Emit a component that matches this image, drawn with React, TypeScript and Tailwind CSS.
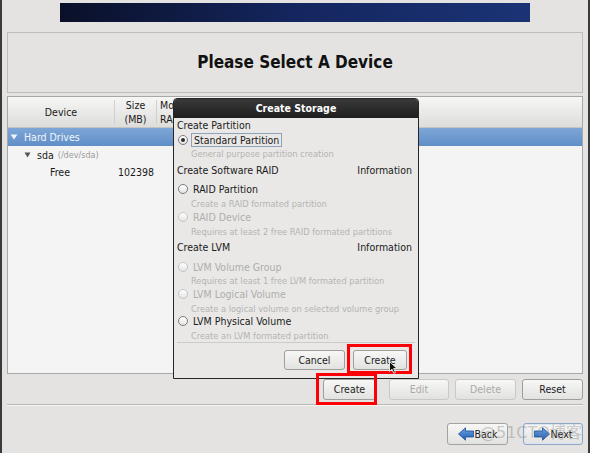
import React from "react";

function Radio({ checked = false, disabled = false }: { checked?: boolean; disabled?: boolean }) {
  return (
    <span
      className={
        "flex items-center justify-center w-[10px] h-[10px] rounded-full border bg-gradient-to-b from-[#ffffff] to-[#e4e4e4] shrink-0 " +
        (disabled ? "border-[#c4c4c4]" : "border-[#7c7c7c]")
      }
    >
      {checked && <span className="w-[4px] h-[4px] rounded-full bg-[#2e2e2e]" />}
    </span>
  );
}

function Btn({
  label,
  w,
  disabled = false,
  h = "h-[21px]",
}: {
  label: string;
  w: string;
  disabled?: boolean;
  h?: string;
}) {
  return (
    <div
      className={
        `${w} ${h} flex items-center justify-center rounded-[3px] border bg-gradient-to-b from-[#f7f7f6] to-[#e2e2e0] text-[10.5px] ` +
        (disabled ? "border-[#c9c9c7] text-[#aaaaa8]" : "border-[#9e9e9c] text-[#1c1c1c]")
      }
    >
      {label}
    </div>
  );
}

function ArrowLeft() {
  return (
    <svg width="16" height="14" viewBox="0 0 16 14">
      <defs>
        <linearGradient id="gl" x1="0" y1="0" x2="0" y2="1">
          <stop offset="0" stopColor="#6ea2e2" />
          <stop offset="1" stopColor="#1f5cb4" />
        </linearGradient>
      </defs>
      <path d="M0.5 7 L7.5 0.8 L7.5 4 L15.5 4 L15.5 10 L7.5 10 L7.5 13.2 Z" fill="url(#gl)" stroke="#1b4f9a" strokeWidth="0.8" />
    </svg>
  );
}

function ArrowRight() {
  return (
    <svg width="16" height="14" viewBox="0 0 16 14">
      <defs>
        <linearGradient id="gr" x1="0" y1="0" x2="0" y2="1">
          <stop offset="0" stopColor="#6ea2e2" />
          <stop offset="1" stopColor="#1f5cb4" />
        </linearGradient>
      </defs>
      <path d="M15.5 7 L8.5 0.8 L8.5 4 L0.5 4 L0.5 10 L8.5 10 L8.5 13.2 Z" fill="url(#gr)" stroke="#1b4f9a" strokeWidth="0.8" />
    </svg>
  );
}

export default function App() {
  return (
    <div className="relative w-[590px] h-[453px] overflow-hidden bg-[#e4e3e1] shadow-[inset_2px_0_0_#3a3a3a,inset_-2px_0_0_#3a3a3a] px-[7px] font-['DejaVu_Sans_Condensed','DejaVu_Sans',sans-serif] text-[#1a1a1a] text-[10.5px] leading-none">
      {/* top banner */}
      <div className="mx-auto mt-[3px] w-[470px] h-[19px] bg-gradient-to-r from-[#0a1029] via-[#14265f] to-[#1b3375]" />

      {/* header box */}
      <div className="mt-[10px] h-[61px] border border-[#bdbdbb] flex items-center justify-center">
        <span className="font-bold text-[17px] text-[#111]">Please Select A Device</span>
      </div>

      {/* table */}
      <div className="mt-[3px] h-[278px] border border-[#a8a8a6] bg-[#f4f4f4] flex flex-col">
        <div className="h-[31px] shrink-0 flex bg-gradient-to-b from-[#f6f6f5] to-[#dddddb] border-b border-[#c4c4c2]">
          <div className="w-[107px] flex items-center justify-center border-r border-[#cfcfcd] my-[3px]">Device</div>
          <div className="w-[42px] flex flex-col items-center justify-center gap-[3px] border-r border-[#cfcfcd] my-[3px]">
            <span>Size</span>
            <span>(MB)</span>
          </div>
          <div className="flex flex-col justify-center gap-[3px] pl-[3px] my-[3px]">
            <span>Mount Point/</span>
            <span>RAID/Volume</span>
          </div>
        </div>
        <div className="h-[18px] shrink-0 flex items-center bg-gradient-to-b from-[#7ea6d7] to-[#5f8ec7] text-[#f2f6fb]">
          <svg width="8" height="6" viewBox="0 0 8 6" className="ml-[2px]">
            <path d="M0.5 0.5 L7.5 0.5 L4 5.5 Z" fill="#eef3fa" />
          </svg>
          <span className="ml-[6px]">Hard Drives</span>
        </div>
        <div className="h-[18px] shrink-0 flex items-center">
          <svg width="7" height="6" viewBox="0 0 7 6" className="ml-[16px]">
            <path d="M0.5 0.5 L6.5 0.5 L3.5 5.5 Z" fill="#555" />
          </svg>
          <span className="ml-[6px]">sda</span>
          <span className="ml-[4px] text-[9px] text-[#9a9a9a]">(/dev/sda)</span>
        </div>
        <div className="h-[16px] shrink-0 flex items-center">
          <span className="ml-[42px] w-[68px]">Free</span>
          <span>102398</span>
        </div>
      </div>

      {/* action buttons */}
      <div className="mt-[5px] h-[21px] flex justify-end">
        <Btn label="Create" w="w-[53px]" />
        <div className="w-[13px]" />
        <Btn label="Edit" w="w-[60px]" disabled />
        <div className="w-[6px]" />
        <Btn label="Delete" w="w-[61px]" disabled />
        <div className="w-[6px]" />
        <Btn label="Reset" w="w-[61px]" />
      </div>

      <div className="mt-[4px] h-px bg-[#b9b9b7] shadow-[0_1px_0_#f4f4f2]" />

      {/* back / next */}
      <div className="mt-[18px] h-[22px] flex justify-end">
        <div className="w-[61px] h-[22px] flex items-center justify-center gap-[1px] rounded-[3px] border border-[#a2a2a0] bg-gradient-to-b from-[#f7f7f6] to-[#e2e2e0] text-[10.5px]">
          <ArrowLeft />
          <span>Back</span>
        </div>
        <div className="w-[15px]" />
        <div className="w-[60px] h-[22px] flex items-center justify-center gap-[1px] rounded-[3px] border border-[#8fa6c8] shadow-[inset_0_0_0_1px_#dbe5f2] bg-gradient-to-b from-[#f7f7f6] to-[#e2e2e0] text-[10.5px]">
          <ArrowRight />
          <span>Next</span>
        </div>
      </div>

      {/* Create Storage dialog */}
      <div className="absolute left-[173px] top-[98px] w-[246px] h-[281px] border border-[#262626] bg-[#e9e8e6] flex flex-col rounded-t-[4px]">
        <div className="h-[19px] shrink-0 flex items-center justify-center bg-gradient-to-b from-[#3a3a3a] to-[#1e1e1e] rounded-t-[3px] text-white font-bold text-[10.5px]">
          Create Storage
        </div>
        <div className="flex flex-col px-[3px]">
          <div className="mt-[1px] h-[12px] flex items-center">Create Partition</div>
          <div className="mt-[3px] h-[12px] flex items-center">
            <span className="ml-[1px]"><Radio checked /></span>
            <span className="ml-[3px] h-[14px] px-[2px] flex items-center border border-[#8ea2bb]">Standard Partition</span>
          </div>
          <div className="mt-[2px] h-[12px] flex items-center pl-[14px] text-[9.2px] text-[#b4b4b2]">General purpose partition creation</div>
          <div className="mt-[4px] h-[12px] flex items-center justify-between pr-[3px]">
            <span>Create Software RAID</span>
            <span>Information</span>
          </div>
          <div className="mt-[7px] h-[12px] flex items-center">
            <span className="ml-[1px]"><Radio /></span>
            <span className="ml-[5px]">RAID Partition</span>
          </div>
          <div className="mt-[3px] h-[12px] flex items-center pl-[14px] text-[9.2px] text-[#b4b4b2]">Create a RAID formated partition</div>
          <div className="mt-[1px] h-[12px] flex items-center text-[#aeaeac]">
            <span className="ml-[1px]"><Radio disabled /></span>
            <span className="ml-[5px]">RAID Device</span>
          </div>
          <div className="mt-[3px] h-[12px] flex items-center pl-[14px] text-[9.2px] text-[#b4b4b2]">Requires at least 2 free RAID formated partitions</div>
          <div className="mt-[3px] h-[12px] flex items-center justify-between pr-[3px]">
            <span>Create LVM</span>
            <span>Information</span>
          </div>
          <div className="mt-[8px] h-[12px] flex items-center text-[#aeaeac]">
            <span className="ml-[1px]"><Radio disabled /></span>
            <span className="ml-[5px]">LVM Volume Group</span>
          </div>
          <div className="mt-[2px] h-[12px] flex items-center pl-[14px] text-[9.2px] text-[#b4b4b2]">Requires at least 1 free LVM formated partition</div>
          <div className="mt-[1px] h-[12px] flex items-center text-[#aeaeac]">
            <span className="ml-[1px]"><Radio disabled /></span>
            <span className="ml-[5px]">LVM Logical Volume</span>
          </div>
          <div className="mt-[3px] h-[12px] flex items-center pl-[14px] text-[9.2px] text-[#b4b4b2]">Create a logical volume on selected volume group</div>
          <div className="mt-[0px] h-[12px] flex items-center">
            <span className="ml-[1px]"><Radio /></span>
            <span className="ml-[5px]">LVM Physical Volume</span>
          </div>
          <div className="mt-[3px] h-[12px] flex items-center pl-[14px] text-[9.2px] text-[#b4b4b2]">Create an LVM formated partition</div>
          <div className="h-px bg-[#cbcbc9]" />
          <div className="mt-[7px] h-[20px] flex justify-end pr-[8px] gap-[8px]">
            <Btn label="Cancel" w="w-[61px]" h="h-[20px]" />
            <Btn label="Create" w="w-[54px]" h="h-[20px]" />
          </div>
        </div>
      </div>

      {/* red annotation rectangles */}
      <div className="absolute left-[347px] top-[344px] w-[65px] h-[30px] border-[3px] border-[#fb0006]" />
      <div className="absolute left-[316px] top-[373px] w-[61px] h-[32px] border-[3px] border-[#fb0006]" />

      {/* mouse cursor */}
      <svg className="absolute left-[389px] top-[361px]" width="9" height="13" viewBox="0 0 9 13">
        <path d="M0.5 0.5 L0.5 10.5 L3 8.2 L4.8 12.3 L6.4 11.6 L4.7 7.6 L8 7.6 Z" fill="#111" stroke="#fff" strokeWidth="0.8" />
      </svg>

      {/* watermark */}
      <div className="absolute left-[480px] top-[425px] text-[16px] leading-none text-[rgba(130,130,130,0.4)] font-['DejaVu_Sans','Noto_Sans_CJK_SC',sans-serif] whitespace-nowrap">
        @51CTO博客
      </div>
    </div>
  );
}
